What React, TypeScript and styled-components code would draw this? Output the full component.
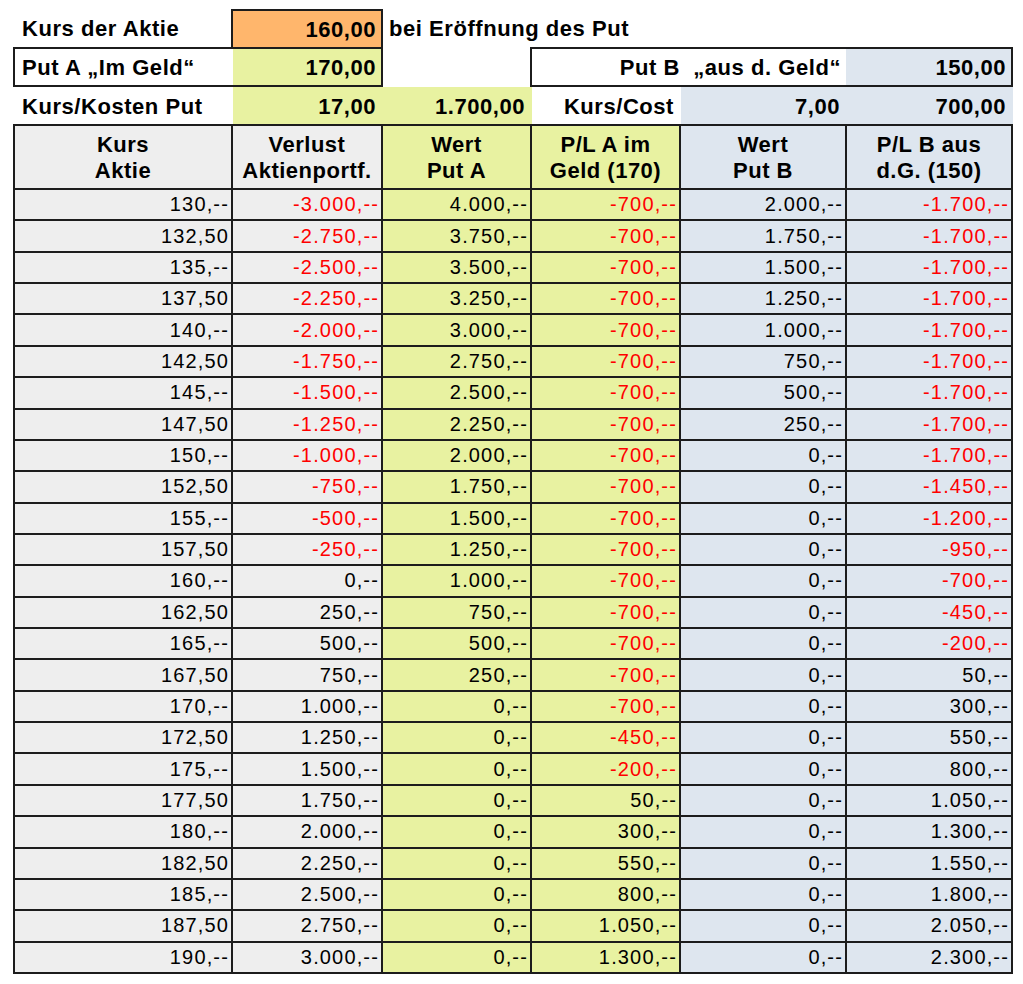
import * as React from 'react'
import styled, { createGlobalStyle } from 'styled-components'

const GlobalStyle = createGlobalStyle`
  html, body {
    margin: 0;
    padding: 0;
    background: #fff;
  }
  body {
    font-family: "Liberation Sans", Arial, sans-serif;
    color: #000;
  }
`

const ORANGE = '#ffb66c'
const GREEN = '#e8f2a1'
const BLUE = '#dee6ef'
const GRAY = '#eeeeee'
const LINE = '#1c1c1c'

const COLS = '220px 150px 149px 149px 166px 166px'

const Sheet = styled.div`
  padding: 9px 0 0 13px;
  width: 1000px;
`

const Top = styled.div`
  display: grid;
  grid-template-columns: ${COLS};
  grid-template-rows: 38px 40px 37px;
`

const Cell = styled.div<{ $bg?: string; $align?: 'left' | 'right' }>`
  display: flex;
  align-items: center;
  justify-content: ${(p) => (p.$align === 'left' ? 'flex-start' : 'flex-end')};
  background: ${(p) => p.$bg || 'transparent'};
  font-size: 22px;
  font-weight: bold;
  letter-spacing: 0.55px;
  white-space: nowrap;
  padding: 2px ${(p) => (p.$align === 'left' ? '0' : '7px')} 0 ${(p) => (p.$align === 'left' ? '9px' : '0')};
  box-sizing: border-box;
`

const Highlight = styled(Cell)`
  border: 2px solid ${LINE};
  border-bottom: none;
  margin-left: -2px;
  padding-right: 5px;
`

const Note = styled(Cell)`
  grid-column: 3 / span 4;
  padding-left: 6px;
`

const Box = styled.div<{ $from: number; $span: number; $split: string }>`
  grid-column: ${(p) => p.$from} / span ${(p) => p.$span};
  display: grid;
  grid-template-columns: ${(p) => p.$split};
  border: 2px solid ${LINE};
  margin-left: ${(p) => (p.$from > 1 ? '-2px' : '0')};
  box-sizing: border-box;
  ${Cell} {
    padding-right: 5px;
  }
  ${Cell}[data-first] {
    padding-left: 7px;
  }
`

const Table = styled.div`
  display: grid;
  grid-template-columns: 218px 150px 149px 149px 166px 166px;
  grid-template-rows: 64px;
  grid-auto-rows: 31.36px;
  border-left: 2px solid ${LINE};
  border-top: 2px solid ${LINE};
  width: max-content;
`

const Head = styled.div<{ $bg: string }>`
  background: ${(p) => p.$bg};
  border-right: 2px solid ${LINE};
  border-bottom: 2px solid ${LINE};
  display: flex;
  align-items: center;
  justify-content: center;
  text-align: center;
  font-size: 22px;
  font-weight: bold;
  line-height: 26px;
  letter-spacing: 0.5px;
  padding-top: 1px;
`

const Num = styled.div<{ $bg: string; $neg?: boolean }>`
  background: ${(p) => p.$bg};
  border-right: 2px solid ${LINE};
  border-bottom: 2px solid ${LINE};
  display: flex;
  align-items: center;
  justify-content: flex-end;
  padding-right: 2px;
  font-size: 20px;
  letter-spacing: 1.15px;
  color: ${(p) => (p.$neg ? '#ff0000' : '#000')};
  white-space: nowrap;
`

const fmt = (v: number) => {
  const s = Math.abs(v).toString().replace(/\B(?=(\d{3})+(?!\d))/g, '.')
  return `${v < 0 ? '-' : ''}${s},--`
}

const fmtKurs = (k: number) => (Number.isInteger(k) ? `${k},--` : `${Math.floor(k)},50`)

const rows = Array.from({ length: 25 }, (_, i) => {
  const k = 130 + i * 2.5
  const loss = (k - 160) * 100
  const a = Math.max(170 - k, 0) * 100
  const b = Math.max(150 - k, 0) * 100
  return { k, loss, a, plA: loss + a - 1700, b, plB: loss + b - 700 }
})

const headers: [string, string, string][] = [
  ['Kurs', 'Aktie', GRAY],
  ['Verlust', 'Aktienportf.', GRAY],
  ['Wert', 'Put A', GREEN],
  ['P/L A im', 'Geld (170)', GREEN],
  ['Wert', 'Put B', BLUE],
  ['P/L B aus', 'd.G. (150)', BLUE],
]

export default function App() {
  return (
    <Sheet>
      <GlobalStyle />
      <Top>
        <Cell $align="left">Kurs der Aktie</Cell>
        <Highlight $bg={ORANGE}>160,00</Highlight>
        <Note $align="left">bei Eröffnung des Put</Note>

        <Box $from={1} $span={2} $split="218px 1fr">
          <Cell $align="left" data-first>Put A „Im Geld“</Cell>
          <Cell $bg={GREEN}>170,00</Cell>
        </Box>
        <div />
        <Box $from={4} $span={3} $split="314px 1fr">
          <Cell>Put B&nbsp;&nbsp;„aus d. Geld“</Cell>
          <Cell $bg={BLUE}>150,00</Cell>
        </Box>

        <Cell $align="left">Kurs/Kosten Put</Cell>
        <Cell $bg={GREEN}>17,00</Cell>
        <Cell $bg={GREEN}>1.700,00</Cell>
        <Cell>Kurs/Cost</Cell>
        <Cell $bg={BLUE}>7,00</Cell>
        <Cell $bg={BLUE}>700,00</Cell>
      </Top>

      <Table>
        {headers.map(([a, b, bg], i) => (
          <Head key={i} $bg={bg}>
            {a}
            <br />
            {b}
          </Head>
        ))}
        {rows.map((r) => (
          <React.Fragment key={r.k}>
            <Num $bg={GRAY}>{fmtKurs(r.k)}</Num>
            <Num $bg={GRAY} $neg={r.loss < 0}>{fmt(r.loss)}</Num>
            <Num $bg={GREEN}>{fmt(r.a)}</Num>
            <Num $bg={GREEN} $neg={r.plA < 0}>{fmt(r.plA)}</Num>
            <Num $bg={BLUE}>{fmt(r.b)}</Num>
            <Num $bg={BLUE} $neg={r.plB < 0}>{fmt(r.plB)}</Num>
          </React.Fragment>
        ))}
      </Table>
    </Sheet>
  )
}
